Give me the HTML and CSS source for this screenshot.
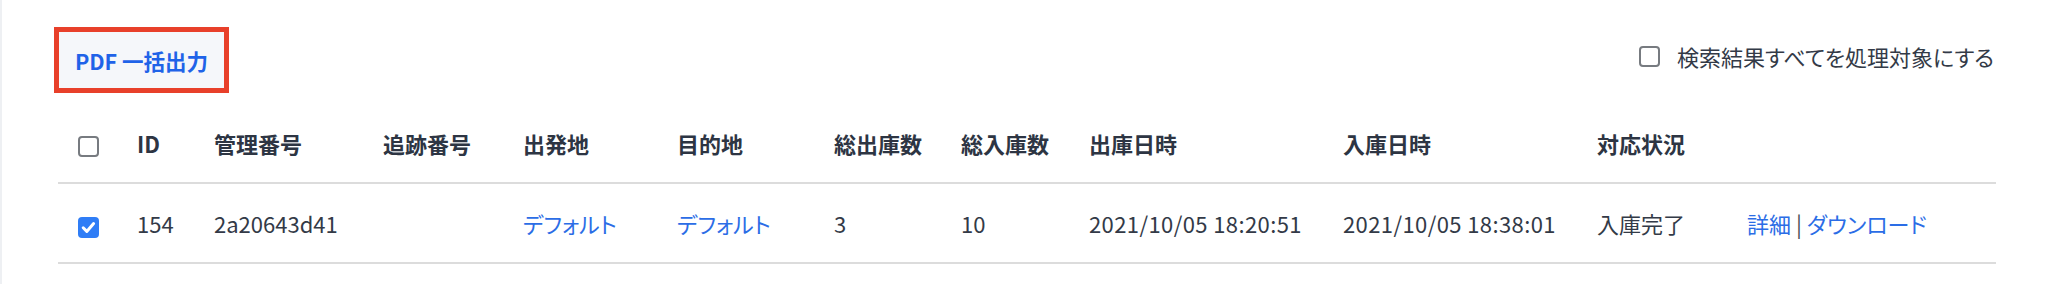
FILE: index.html
```html
<!DOCTYPE html>
<html lang="ja">
<head>
<meta charset="utf-8">
<title>出庫一覧</title>
<link rel="stylesheet" href="styles.css">
</head>
<body>
<div class="page">
  <div class="toolbar">
    <button class="btn-pdf" type="button">PDF 一括出力</button>
    <label class="select-all">
      <span class="cb"></span>
      <span>検索結果すべてを処理対象にする</span>
    </label>
  </div>
  <table class="list">
    <colgroup>
      <col class="c-check">
      <col class="c-id">
      <col class="c-mng">
      <col class="c-track">
      <col class="c-from">
      <col class="c-to">
      <col class="c-out">
      <col class="c-in">
      <col class="c-outdate">
      <col class="c-indate">
      <col class="c-status">
      <col class="c-action">
    </colgroup>
    <thead>
      <tr>
        <th class="check"><span class="cb"></span></th>
        <th>ID</th>
        <th>管理番号</th>
        <th>追跡番号</th>
        <th>出発地</th>
        <th>目的地</th>
        <th>総出庫数</th>
        <th>総入庫数</th>
        <th>出庫日時</th>
        <th>入庫日時</th>
        <th>対応状況</th>
        <th></th>
      </tr>
    </thead>
    <tbody>
      <tr>
        <td class="check"><span class="cb checked"><svg viewBox="0 0 21 21" width="21" height="21"><path d="M5.2 10.8 L8.8 14.4 L15.6 6.6" fill="none" stroke="#fff" stroke-width="3" stroke-linecap="round" stroke-linejoin="round"/></svg></span></td>
        <td>154</td>
        <td>2a20643d41</td>
        <td></td>
        <td><a href="#">デフォルト</a></td>
        <td><a href="#">デフォルト</a></td>
        <td>3</td>
        <td>10</td>
        <td class="date">2021/10/05 18:20:51</td>
        <td class="date">2021/10/05 18:38:01</td>
        <td>入庫完了</td>
        <td><a href="#">詳細</a> <span class="sep">|</span> <a href="#">ダウンロード</a></td>
      </tr>
    </tbody>
  </table>
</div>
</body>
</html>
```

FILE: styles.css
```css
html, body {
  margin: 0;
  padding: 0;
  background: #ffffff;
}

body {
  font-family: "Noto Sans CJK JP", "Noto Sans", sans-serif;
  font-feature-settings: "palt";
  color: #333a47;
  font-size: 22px;
}

.page {
  min-height: 284px;
  border-left: 2px solid #eef0f3;
  padding: 32px 52px 0 56px;
  box-sizing: border-box;
}

.toolbar {
  display: flex;
  justify-content: space-between;
  align-items: flex-start;
}

.btn-pdf {
  width: 165px;
  height: 56px;
  margin-left: 1px;
  border: none;
  background: #f5f7fa;
  color: #1f63e8;
  font-family: inherit;
  font-feature-settings: normal;
  font-size: 21.5px;
  font-weight: 700;
  outline: 5px solid #e8402a;
  padding: 0;
}

.select-all {
  display: flex;
  align-items: center;
  gap: 17px;
  margin-top: 9px;
  margin-right: 2px;
  font-size: 22px;
  line-height: 30px;
  color: #333a47;
}

.cb {
  display: inline-block;
  width: 21px;
  height: 21px;
  box-sizing: border-box;
  border: 2px solid #777b80;
  border-radius: 4px;
  background: #fff;
  vertical-align: middle;
}

.cb.checked {
  border: none;
  background: #2f7df6;
}

.cb svg {
  display: block;
}

.list {
  margin-top: 15px;
  width: 1938px;
  border-collapse: collapse;
  table-layout: fixed;
}

.c-check { width: 79px; }
.c-id { width: 77px; }
.c-mng { width: 169px; }
.c-track { width: 140px; }
.c-from { width: 154px; }
.c-to { width: 157px; }
.c-out { width: 127px; }
.c-in { width: 128px; }
.c-outdate { width: 254px; }
.c-indate { width: 254px; }
.c-status { width: 150px; }
.c-action { width: 249px; }

.list th,
.list td {
  padding: 0;
  text-align: left;
  vertical-align: middle;
  white-space: nowrap;
  border-bottom: 2px solid #dcdcdc;
}

.list th {
  height: 79px;
  font-weight: 700;
  color: #2d3543;
}

.list td {
  height: 78px;
}

.list .check {
  padding-left: 20px;
}

.list .date {
  letter-spacing: 0.4px;
}

.list a {
  color: #2b6de6;
  text-decoration: none;
}

.sep {
  color: #4a4f57;
}
```
